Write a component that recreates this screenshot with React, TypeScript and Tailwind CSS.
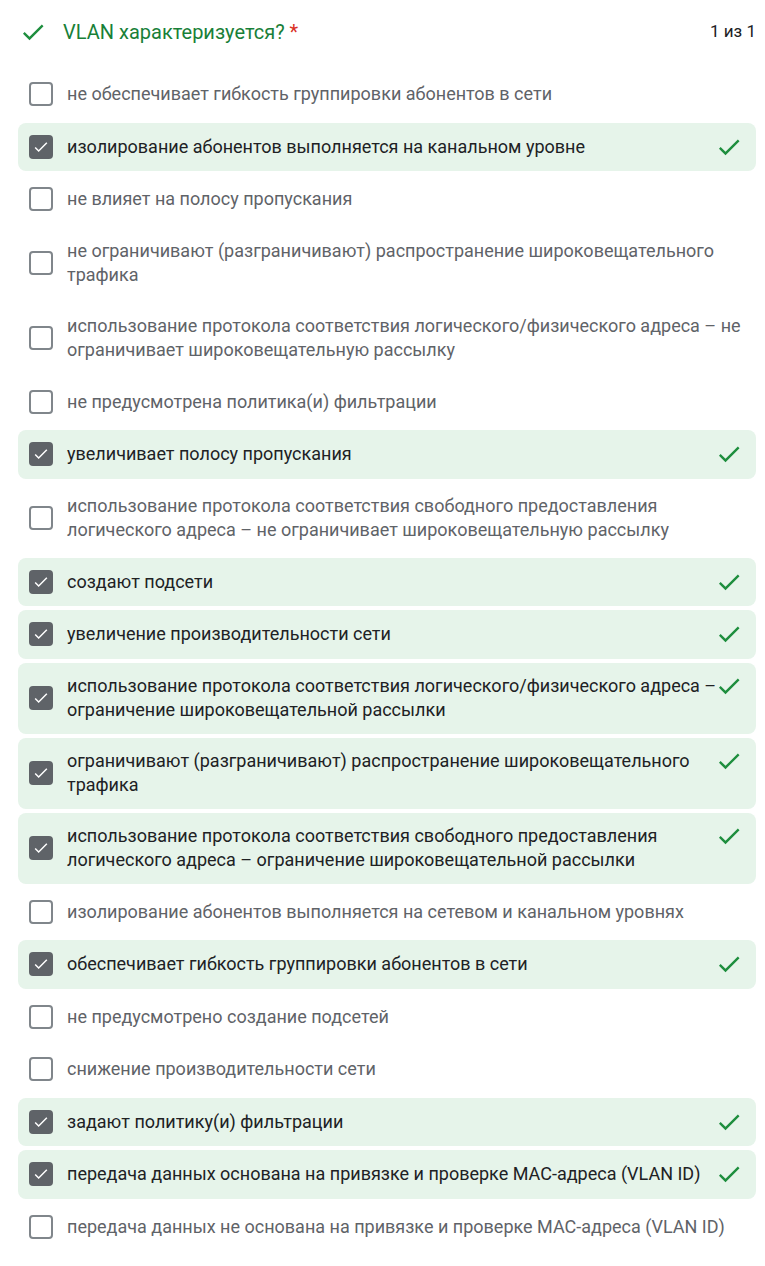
import React from 'react';

type Option = { text: string; checked: boolean };

const options: Option[] = [
  { text: 'не обеспечивает гибкость группировки абонентов в сети', checked: false },
  { text: 'изолирование абонентов выполняется на канальном уровне', checked: true },
  { text: 'не влияет на полосу пропускания', checked: false },
  { text: 'не ограничивают (разграничивают) распространение широковещательного трафика', checked: false },
  { text: 'использование протокола соответствия логического/физического адреса – не ограничивает широковещательную рассылку', checked: false },
  { text: 'не предусмотрена политика(и) фильтрации', checked: false },
  { text: 'увеличивает полосу пропускания', checked: true },
  { text: 'использование протокола соответствия свободного предоставления логического адреса – не ограничивает широковещательную рассылку', checked: false },
  { text: 'создают подсети', checked: true },
  { text: 'увеличение производительности сети', checked: true },
  { text: 'использование протокола соответствия логического/физического адреса – ограничение широковещательной рассылки', checked: true },
  { text: 'ограничивают (разграничивают) распространение широковещательного трафика', checked: true },
  { text: 'использование протокола соответствия свободного предоставления логического адреса – ограничение широковещательной рассылки', checked: true },
  { text: 'изолирование абонентов выполняется на сетевом и канальном уровнях', checked: false },
  { text: 'обеспечивает гибкость группировки абонентов в сети', checked: true },
  { text: 'не предусмотрено создание подсетей', checked: false },
  { text: 'снижение производительности сети', checked: false },
  { text: 'задают политику(и) фильтрации', checked: true },
  { text: 'передача данных основана на привязке и проверке MAC-адреса (VLAN ID)', checked: true },
  { text: 'передача данных не основана на привязке и проверке MAC-адреса (VLAN ID)', checked: false },
];

// rows that wrap onto two lines in the original
const twoLines = [3, 4, 7, 10, 11, 12];

const Check = ({ className }: { className?: string }) => (
  <svg viewBox="0 0 24 24" className={className} fill="currentColor">
    <path d="M9 16.17L4.83 12l-1.42 1.41L9 19 21 7l-1.41-1.41z" />
  </svg>
);

const Box = ({ checked }: { checked: boolean }) =>
  checked ? (
    <div className="w-[24px] h-[24px] rounded-[4px] bg-[#5f6368] flex items-center justify-center shrink-0">
      <svg viewBox="0 0 24 24" className="w-[20px] h-[20px]" fill="none" stroke="white" strokeWidth="1.8">
        <path d="M5 12.5l4.2 4.2L19 7" />
      </svg>
    </div>
  ) : (
    <div className="w-[24px] h-[24px] rounded-[4px] border-2 border-[#80868b] bg-white shrink-0" />
  );

export default function App() {
  return (
    <div className="bg-white min-h-screen w-[765px] pl-[18px] pr-[9px] pt-[18px] font-['Roboto',sans-serif]">
      {/* header */}
      <div className="flex items-center h-[28px] mb-[24px]">
        <Check className="w-[28px] h-[28px] text-[#1e8e3e] ml-[1px]" />
        <div className="ml-[16px] text-[20px] text-[#188038]">
          VLAN характеризуется? <span className="text-[#d93025]">*</span>
        </div>
        <div className="ml-auto text-[17px] text-[#202124]">1 из 1</div>
      </div>

      <div className="flex flex-col gap-[4px]">
        {options.map((o, i) => {
          const twoLine = twoLines.includes(i);
          return (
            <div
              key={i}
              className={`flex items-center rounded-[8px] pl-[11px] pr-[13px] ${twoLine ? 'py-[11.5px]' : 'h-[48.5px]'} ${o.checked ? 'bg-[#e6f4ea]' : ''}`}
            >
              <Box checked={o.checked} />
              <div
                className={`flex-1 ml-[14px] text-[18px] leading-[24px] ${o.checked ? 'text-[#202124]' : 'text-[#5f6368]'}`}
              >
                {o.text}
              </div>
              {o.checked && (
                <Check className={`w-[28px] h-[28px] text-[#1e8e3e] shrink-0 -ml-[4px] ${twoLine ? 'self-start -mt-[2px]' : ''}`} />
              )}
            </div>
          );
        })}
      </div>
    </div>
  );
}
